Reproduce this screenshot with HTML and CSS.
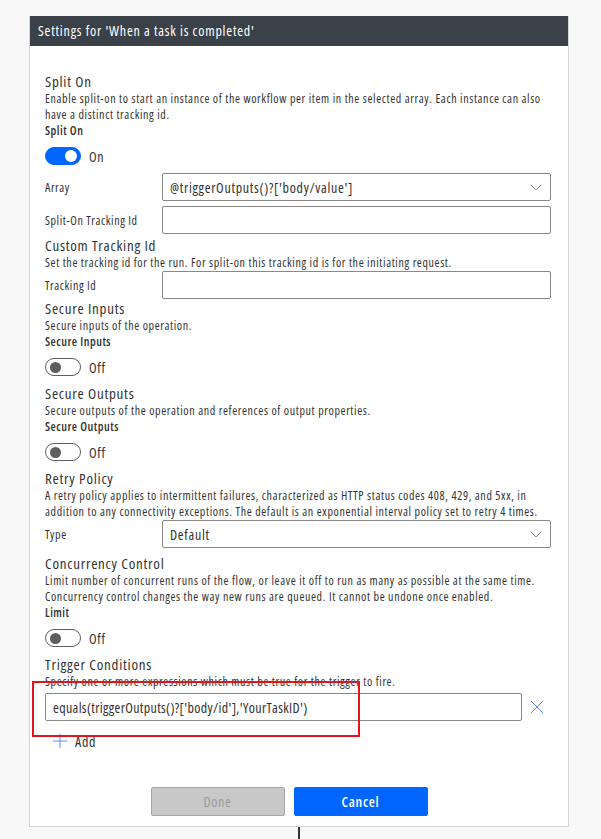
FILE: index.html
```html
<!DOCTYPE html>
<html lang="en">

<head>
    <meta charset="UTF-8">
    <meta name="viewport" content="width=device-width, initial-scale=1.0">
    <title>Settings</title>
    <link rel="stylesheet" href="styles.css">
</head>

<body>
    <div class="panel">
        <div class="panel-head">Settings for 'When a task is completed'</div>

        <div class="panel-body">
            <!-- split on -->
            <div class="group">
                <div class="group-title">Split On</div>
                <div class="group-desc">Enable split-on to start an instance of the workflow per item in the selected array. Each instance can also have a distinct tracking id.</div>
                <div class="field-label">Split On</div>
                <div class="toggle-row">
                    <span class="toggle on"><span class="knob"></span></span>
                    <span class="toggle-text">On</span>
                </div>
                <div class="field gap5">
                    <div class="field-name">Array</div>
                    <div class="box select">@triggerOutputs()?['body/value']
                        <svg class="chevron" width="12" height="7" viewBox="0 0 12 7"><path d="M0.5 0.5l5.5 5.5 5.5-5.5" fill="none" stroke="#8a8886" stroke-width="1"/></svg>
                    </div>
                </div>
                <div class="field gap2">
                    <div class="field-name">Split-On Tracking Id</div>
                    <div class="box"></div>
                </div>
            </div>

            <!-- custom tracking id -->
            <div class="group">
                <div class="group-title">Custom Tracking Id</div>
                <div class="group-desc">Set the tracking id for the run. For split-on this tracking id is for the initiating request.</div>
                <div class="field">
                    <div class="field-name">Tracking Id</div>
                    <div class="box"></div>
                </div>
            </div>

            <!-- secure inputs -->
            <div class="group">
                <div class="group-title">Secure Inputs</div>
                <div class="group-desc">Secure inputs of the operation.</div>
                <div class="field-label">Secure Inputs</div>
                <div class="toggle-row">
                    <span class="toggle"><span class="knob"></span></span>
                    <span class="toggle-text">Off</span>
                </div>
            </div>

            <!-- secure outputs -->
            <div class="group">
                <div class="group-title">Secure Outputs</div>
                <div class="group-desc">Secure outputs of the operation and references of output properties.</div>
                <div class="field-label">Secure Outputs</div>
                <div class="toggle-row">
                    <span class="toggle"><span class="knob"></span></span>
                    <span class="toggle-text">Off</span>
                </div>
            </div>

            <!-- retry policy -->
            <div class="group">
                <div class="group-title">Retry Policy</div>
                <div class="group-desc">A retry policy applies to intermittent failures, characterized as HTTP status codes 408, 429, and 5xx, in addition to any connectivity exceptions. The default is an exponential interval policy set to retry 4 times.</div>
                <div class="field gap6">
                    <div class="field-name">Type</div>
                    <div class="box select">Default
                        <svg class="chevron" width="12" height="7" viewBox="0 0 12 7"><path d="M0.5 0.5l5.5 5.5 5.5-5.5" fill="none" stroke="#8a8886" stroke-width="1"/></svg>
                    </div>
                </div>
            </div>

            <!-- concurrency -->
            <div class="group">
                <div class="group-title">Concurrency Control</div>
                <div class="group-desc">Limit number of concurrent runs of the flow, or leave it off to run as many as possible at the same time. Concurrency control changes the way new runs are queued. It cannot be undone once enabled.</div>
                <div class="field-label">Limit</div>
                <div class="toggle-row">
                    <span class="toggle"><span class="knob"></span></span>
                    <span class="toggle-text">Off</span>
                </div>
            </div>

            <!-- trigger conditions -->
            <div class="group trigger">
                <div class="group-title">Trigger Conditions</div>
                <div class="group-desc">Specify one or more expressions which must be true for the trigger to fire.</div>
                <div class="cond-row">
                    <div class="box cond">equals(triggerOutputs()?['body/id'],'YourTaskID')</div>
                    <svg class="remove" width="14" height="14" viewBox="0 0 14 14"><path d="M1 1l12 12M13 1L1 13" stroke="#5a8cff" stroke-width="1" fill="none"/></svg>
                </div>
                <div class="add-row">
                    <svg width="14" height="14" viewBox="0 0 14 14"><path d="M7 0v14M0 7h14" stroke="#5a8cff" stroke-width="1" fill="none"/></svg>
                    <span>Add</span>
                </div>
                <div class="highlight"></div>
            </div>
        </div>

        <div class="panel-foot">
            <button type="button" class="btn done" disabled>Done</button>
            <button type="button" class="btn cancel">Cancel</button>
        </div>
    </div>
    <div class="connector"></div>
</body>

</html>
```

FILE: styles.css
```css
* {
  box-sizing: border-box;
}

body {
  margin: 0;
  height: 839px;
  overflow: hidden;
  background-color: #f8f8f8;
  font-family: 'Open Sans', sans-serif;
  font-stretch: 75%;
  color: #323130;
}

.panel {
  margin: 16px 0 0 29px;
  width: 540px;
  background-color: #fff;
  border: 1px solid #d4d4d4;
  border-top: none;
}

.panel-head {
  height: 30px;
  line-height: 30px;
  padding-left: 8px;
  background-color: #3b4149;
  color: #fff;
  font-size: 14px;
  letter-spacing: 0.8px;
}

.panel-body {
  padding: 26px 17px 0 15px;
}

.group {
  position: relative;
}

.group-title {
  font-size: 15px;
  line-height: 19px;
  letter-spacing: 0.75px;
  color: #333;
}

.group-desc {
  font-size: 12px;
  line-height: 16px;
  letter-spacing: 0.63px;
  color: #333;
}

.field-label {
  font-size: 12px;
  line-height: 16px;
  font-weight: 600;
  letter-spacing: 0.5px;
}

.toggle-row {
  display: flex;
  align-items: center;
  gap: 8px;
  height: 18px;
  margin: 8px 0;
}

.toggle {
  display: flex;
  align-items: center;
  width: 36px;
  height: 18px;
  border-radius: 9px;
  border: 1px solid #605e5c;
  padding: 0 4px;
}

.toggle .knob {
  width: 11px;
  height: 11px;
  border-radius: 50%;
  background-color: #605e5c;
}

.toggle.on {
  background-color: #0066ff;
  border-color: #0066ff;
  justify-content: flex-end;
  padding: 0 3px;
}

.toggle.on .knob {
  width: 12px;
  height: 12px;
  background-color: #fff;
}

.toggle-text {
  font-size: 14px;
  letter-spacing: 0.7px;
}

.field {
  display: flex;
  align-items: center;
  height: 28px;
}

.gap5 {
  margin-bottom: 5px;
}

.gap2 {
  margin-bottom: 2px;
}

.gap6 {
  margin-bottom: 6px;
}

.field-name {
  width: 117px;
  font-size: 12px;
  letter-spacing: 0.6px;
}

.box {
  flex: 1;
  display: flex;
  align-items: center;
  height: 28px;
  padding: 0 7px;
  border: 1px solid #8a8886;
  border-radius: 2px;
  font-size: 14px;
  letter-spacing: 0.7px;
}

.select {
  justify-content: space-between;
}

.chevron {
  margin-right: 1px;
}

.cond-row {
  display: flex;
  align-items: center;
  margin-top: 3px;
}

.cond {
  padding-left: 7px;
  letter-spacing: 0.35px;
}

.remove {
  margin: 0 7px 0 8px;
}

.add-row {
  display: flex;
  align-items: center;
  gap: 8px;
  height: 16px;
  margin: 12px 0 0 8px;
  font-size: 14px;
  letter-spacing: 0.7px;
}

.highlight {
  position: absolute;
  left: -13px;
  top: 26px;
  width: 328px;
  height: 56px;
  border: 2px solid #e3141e;
}

.panel-foot {
  display: flex;
  justify-content: center;
  gap: 9px;
  padding: 38px 20px 10px 0;
}

.btn {
  width: 134px;
  height: 29px;
  border-radius: 2px;
  font-family: inherit;
  font-stretch: 75%;
  font-size: 14px;
  letter-spacing: 0.7px;
}

.done {
  background-color: #c8c8c8;
  border: 1px solid #a6a6a6;
  color: #9a9a9a;
}

.cancel {
  background-color: #0066ff;
  border: 1px solid #0066ff;
  color: #fff;
  font-weight: 600;
}

.connector {
  width: 2px;
  height: 20px;
  margin-left: 298px;
  background-color: #333;
}
```
